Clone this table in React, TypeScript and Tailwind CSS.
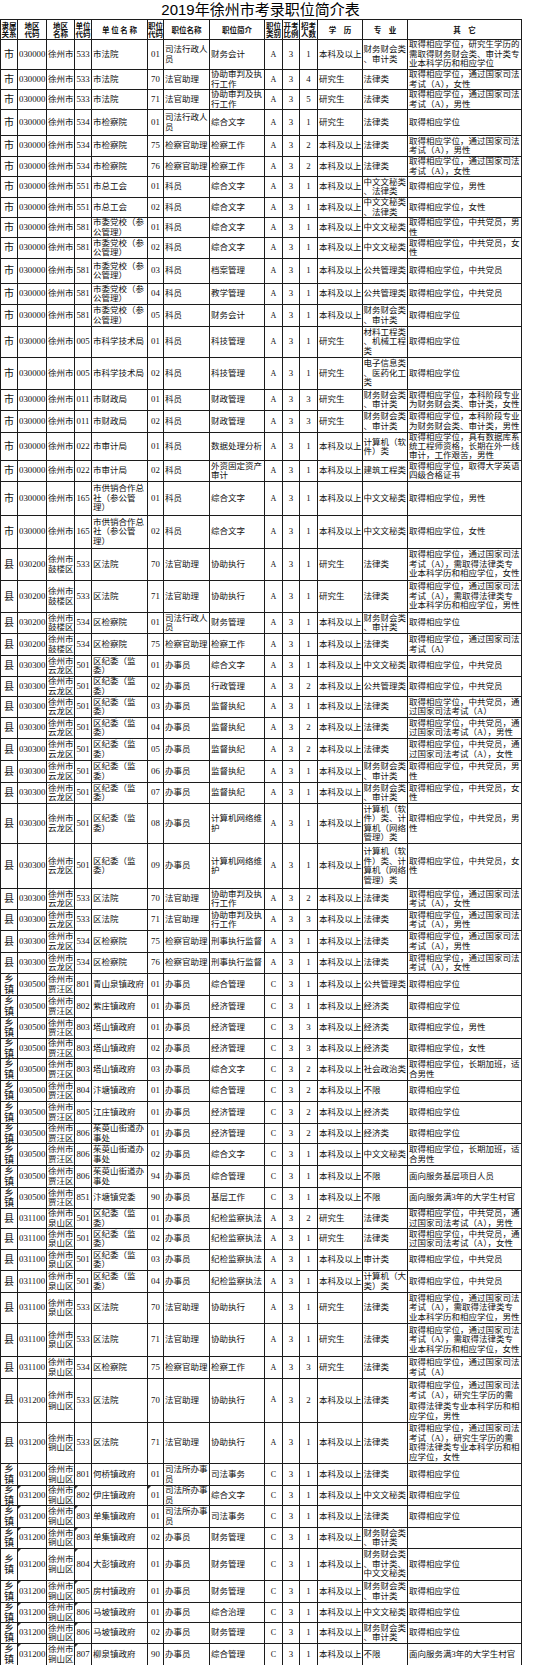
import React from "react";

type Row = [string, string, number[]?, string?];

const CITY = "市|030000|徐州市";
const GL = "县|030200|徐州市鼓楼区";
const YL = "县|030300|徐州市云龙区";
const JW = "乡镇|030500|徐州市贾汪区";
const QS = "县|031100|徐州市泉山区";
const TS = "县|031200|徐州市铜山区";
const TSX = "乡镇|031200|徐州市铜山区";

const rows: Row[] = [
  [CITY + "|533|市法院|01|司法行政人员|财务会计|A|3|1|本科及以上|财务财会类、审计类|取得相应学位，研究生学历的需取得财务财会类、审计类专业本科学历和相应学位", "h-[30px]"],
  [CITY + "|533|市法院|70|法官助理|协助审判及执行工作|A|3|4|研究生|法律类|取得相应学位，通过国家司法考试（A），女性", "h-[20px]"],
  [CITY + "|533|市法院|71|法官助理|协助审判及执行工作|A|3|5|研究生|法律类|取得相应学位，通过国家司法考试（A），男性", "h-[20px]"],
  [CITY + "|534|市检察院|01|司法行政人员|综合文字|A|3|1|研究生|法律类|取得相应学位", "h-[26px]"],
  [CITY + "|534|市检察院|75|检察官助理|检察工作|A|3|2|本科及以上|法律类|取得相应学位，通过国家司法考试（A），男性", "h-[21px]"],
  [CITY + "|534|市检察院|76|检察官助理|检察工作|A|3|2|本科及以上|法律类|取得相应学位，通过国家司法考试（A），女性", "h-[20px]"],
  [CITY + "|551|市总工会|01|科员|综合文字|A|3|1|本科及以上|中文文秘类、法律类|取得相应学位，男性", "h-[21px]"],
  [CITY + "|551|市总工会|02|科员|综合文字|A|3|1|本科及以上|中文文秘类、法律类|取得相应学位，女性", "h-[20px]"],
  [CITY + "|581|市委党校（参公管理）|01|科员|综合文字|A|3|1|本科及以上|中文文秘类|取得相应学位，中共党员，男性", "h-[20px]"],
  [CITY + "|581|市委党校（参公管理）|02|科员|综合文字|A|3|1|本科及以上|中文文秘类|取得相应学位，中共党员，女性", "h-[21px]"],
  [CITY + "|581|市委党校（参公管理）|03|科员|档案管理|A|3|1|本科及以上|公共管理类|取得相应学位，中共党员", "h-[25px]"],
  [CITY + "|581|市委党校（参公管理）|04|科员|教学管理|A|3|1|本科及以上|公共管理类|取得相应学位，中共党员", "h-[21px]"],
  [CITY + "|581|市委党校（参公管理）|05|科员|财务会计|A|3|1|本科及以上|财务财会类、审计类|取得相应学位", "h-[22px]"],
  [CITY + "|005|市科学技术局|01|科员|科技管理|A|3|1|研究生|材料工程类、机械工程类|取得相应学位", "h-[31px]"],
  [CITY + "|005|市科学技术局|02|科员|科技管理|A|3|1|研究生|电子信息类、医药化工类|取得相应学位", "h-[32px]"],
  [CITY + "|011|市财政局|01|科员|财政管理|A|3|3|研究生|财务财会类、审计类|取得相应学位，本科阶段专业为财务财会类、审计类，女性", "h-[21px]"],
  [CITY + "|011|市财政局|02|科员|财政管理|A|3|3|研究生|财务财会类、审计类|取得相应学位，本科阶段专业为财务财会类、审计类，男性", "h-[22px]"],
  [CITY + "|022|市审计局|01|科员|数据处理分析|A|3|1|本科及以上|计算机（软件）类|取得相应学位，具有数据库系统工程师资格，长期在外一线审计，工作艰苦，男性", "h-[28px]", undefined, "leading-[9px]"],
  [CITY + "|022|市审计局|02|科员|外资固定资产审计|A|3|1|本科及以上|建筑工程类|取得相应学位，取得大学英语四级合格证书", "h-[21px]"],
  [CITY + "|165|市供销合作总社（参公管理）|01|科员|综合文字|A|3|1|本科及以上|中文文秘类|取得相应学位，男性", "h-[34px]"],
  [CITY + "|165|市供销合作总社（参公管理）|02|科员|综合文字|A|3|1|本科及以上|中文文秘类|取得相应学位，女性", "h-[33px]"],
  [GL + "|533|区法院|70|法官助理|协助执行|A|3|1|研究生|法律类|取得相应学位，通过国家司法考试（A），需取得法律类专业本科学历和相应学位，女性", "h-[32px]"],
  [GL + "|533|区法院|71|法官助理|协助执行|A|3|1|研究生|法律类|取得相应学位，通过国家司法考试（A），需取得法律类专业本科学历和相应学位，男性", "h-[32px]"],
  [GL + "|534|区检察院|01|司法行政人员|财务管理|A|3|1|本科及以上|财务财会类、审计类|取得相应学位", "h-[21px]"],
  [GL + "|534|区检察院|75|检察官助理|检察工作|A|3|1|本科及以上|法律类|取得相应学位，通过国家司法考试（A）", "h-[22px]"],
  [YL + "|501|区纪委（监委）|01|办事员|综合文字|A|3|1|本科及以上|中文文秘类|取得相应学位，中共党员", "h-[21px]"],
  [YL + "|501|区纪委（监委）|02|办事员|行政管理|A|3|2|本科及以上|公共管理类|取得相应学位，中共党员", "h-[20px]"],
  [YL + "|501|区纪委（监委）|03|办事员|监督执纪|A|3|1|本科及以上|法律类|取得相应学位，中共党员，通过国家司法考试（A）", "h-[21px]"],
  [YL + "|501|区纪委（监委）|04|办事员|监督执纪|A|3|2|本科及以上|法律类|取得相应学位，中共党员，通过国家司法考试（A），男性", "h-[21px]"],
  [YL + "|501|区纪委（监委）|05|办事员|监督执纪|A|3|2|本科及以上|法律类|取得相应学位，中共党员，通过国家司法考试（A），女性", "h-[22px]"],
  [YL + "|501|区纪委（监委）|06|办事员|监督执纪|A|3|1|本科及以上|财务财会类、审计类|取得相应学位，中共党员，男性", "h-[22px]"],
  [YL + "|501|区纪委（监委）|07|办事员|监督执纪|A|3|1|本科及以上|财务财会类、审计类|取得相应学位，中共党员，女性", "h-[21px]"],
  [YL + "|501|区纪委（监委）|08|办事员|计算机网络维护|A|3|1|本科及以上|计算机（软件）类、计算机（网络管理）类|取得相应学位，中共党员，男性", "h-[40px]"],
  [YL + "|501|区纪委（监委）|09|办事员|计算机网络维护|A|3|1|本科及以上|计算机（软件）类、计算机（网络管理）类|取得相应学位，中共党员，女性", "h-[45px]"],
  [YL + "|533|区法院|70|法官助理|协助审判及执行工作|A|3|2|本科及以上|法律类|取得相应学位，通过国家司法考试（A），女性", "h-[21px]"],
  [YL + "|533|区法院|71|法官助理|协助审判及执行工作|A|3|3|本科及以上|法律类|取得相应学位，通过国家司法考试（A），男性", "h-[21px]"],
  [YL + "|534|区检察院|75|检察官助理|刑事执行监督|A|3|1|本科及以上|法律类|取得相应学位，通过国家司法考试（A），男性", "h-[22px]"],
  [YL + "|534|区检察院|76|检察官助理|刑事执行监督|A|3|1|本科及以上|法律类|取得相应学位，通过国家司法考试（A），女性", "h-[21px]"],
  [JW + "|801|青山泉镇政府|01|办事员|综合管理|C|3|1|本科及以上|公共管理类|取得相应学位", "h-[22px]"],
  [JW + "|802|紫庄镇政府|01|办事员|经济管理|C|3|1|本科及以上|经济类|取得相应学位", "h-[22px]"],
  [JW + "|803|塔山镇政府|01|办事员|经济管理|C|3|3|本科及以上|经济类|取得相应学位，男性", "h-[21px]"],
  [JW + "|803|塔山镇政府|02|办事员|经济管理|C|3|3|本科及以上|经济类|取得相应学位，女性", "h-[20px]"],
  [JW + "|803|塔山镇政府|03|办事员|综合文字|C|3|2|本科及以上|社会政治类|取得相应学位，长期加班，适合男性", "h-[22px]"],
  [JW + "|804|汴塘镇政府|01|办事员|综合管理|C|3|2|本科及以上|不限|取得相应学位", "h-[21px]"],
  [JW + "|805|江庄镇政府|01|办事员|经济管理|C|3|2|本科及以上|经济类|取得相应学位", "h-[22px]"],
  [JW + "|806|茱萸山街道办事处|01|办事员|经济管理|C|3|2|本科及以上|经济类|取得相应学位", "h-[20px]"],
  [JW + "|806|茱萸山街道办事处|02|办事员|综合文字|C|3|1|本科及以上|中文文秘类|取得相应学位，长期加班，适合男性", "h-[22px]"],
  [JW + "|806|茱萸山街道办事处|94|办事员|综合管理|C|3|1|本科及以上|不限|面向服务基层项目人员", "h-[22px]"],
  [JW + "|851|汴塘镇党委|90|办事员|基层工作|C|3|1|本科及以上|不限|面向服务满3年的大学生村官", "h-[21px]"],
  [QS + "|501|区纪委（监委）|01|办事员|纪检监察执法|A|3|2|研究生|法律类|取得相应学位，中共党员，通过国家司法考试（A），男性", "h-[20px]"],
  [QS + "|501|区纪委（监委）|02|办事员|纪检监察执法|A|3|1|研究生|法律类|取得相应学位，中共党员，通过国家司法考试（A），女性", "h-[21px]"],
  [QS + "|501|区纪委（监委）|03|办事员|纪检监察执法|A|3|1|本科及以上|审计类|取得相应学位，中共党员", "h-[21px]"],
  [QS + "|501|区纪委（监委）|04|办事员|纪检监察执法|A|3|1|本科及以上|计算机（大类）类|取得相应学位，中共党员", "h-[22px]"],
  [QS + "|533|区法院|70|法官助理|协助执行|A|3|1|研究生|法律类|取得相应学位，通过国家司法考试（A），需取得法律类专业本科学历和相应学位，男性", "h-[31px]"],
  [QS + "|533|区法院|71|法官助理|协助执行|A|3|1|研究生|法律类|取得相应学位，通过国家司法考试（A），需取得法律类专业本科学历和相应学位，女性", "h-[33px]"],
  [QS + "|534|区检察院|75|检察官助理|检察工作|A|3|3|研究生|法律类|取得相应学位，通过国家司法考试（A）", "h-[22px]"],
  [TS + "|533|区法院|70|法官助理|协助执行|A|3|2|本科及以上|法律类|取得相应学位，通过国家司法考试（A），研究生学历的需取得法律类专业本科学历和相应学位，男性", "h-[44px]", undefined, "leading-[10.5px]"],
  [TS + "|533|区法院|71|法官助理|协助执行|A|3|1|本科及以上|法律类|取得相应学位，通过国家司法考试（A），研究生学历的需取得法律类专业本科学历和相应学位，女性", "h-[41px]"],
  [TSX + "|801|何桥镇政府|01|司法所办事员|司法事务|C|3|1|本科及以上|法律类|取得相应学位", "h-[22px]"],
  [TSX + "|802|伊庄镇政府|01|司法所办事员|综合文字|C|3|1|本科及以上|中文文秘类|取得相应学位", "h-[20px]", [1, 3, 5]],
  [TSX + "|803|单集镇政府|01|司法所办事员|司法事务|C|3|1|本科及以上|法律类|取得相应学位", "h-[22px]", [1, 3]],
  [TSX + "|803|单集镇政府|02|办事员|财务管理|C|3|1|本科及以上|财务财会类、审计类|", "h-[21px]", [1, 3]],
  [TSX + "|804|大彭镇政府|01|办事员|财务管理|C|3|1|本科及以上|财务财会类、审计类、中文文秘类|取得相应学位", "h-[32px]", [1, 3]],
  [TSX + "|805|房村镇政府|01|办事员|财务管理|C|3|1|本科及以上|财务财会类、审计类|取得相应学位", "h-[22px]", [1, 3]],
  [TSX + "|806|马坡镇政府|01|办事员|综合治理|C|3|1|本科及以上|中文文秘类|取得相应学位", "h-[20px]", [1, 3]],
  [TSX + "|806|马坡镇政府|02|办事员|财务管理|C|3|1|本科及以上|财务财会类、审计类|取得相应学位", "h-[21px]", [1, 3]],
  [TSX + "|807|柳泉镇政府|90|办事员|综合管理|C|3|1|本科及以上|不限|面向服务满3年的大学生村官", "h-[22px]", [1, 3]],
];

// per-column text styling (inner block)
const colText: string[] = [
  "text-center text-[10px] px-[1px]",
  "text-left text-[8.8px] pl-[1px]",
  "text-left text-[8.5px] pl-[1px]",
  "text-center text-[8.8px]",
  "text-left text-[8.5px] pl-[1px]",
  "text-center text-[8.8px]",
  "text-left text-[8.5px] pl-[1px]",
  "text-left text-[8.5px] pl-[1px]",
  "text-center text-[8px]",
  "text-center text-[8.8px]",
  "text-center text-[8.8px]",
  "text-left text-[8.5px] pl-[1px]",
  "text-left text-[8.5px] pl-[0.5px] [line-break:anywhere]",
  "text-left text-[8.5px] pl-[1px] [line-break:anywhere]",
];

const gridCols =
  "grid grid-cols-[17px_29px_28px_17px_56px_16px_46px_55px_18px_17px_18px_45px_45px_114px]";

const headers: string[][] = [
  ["隶属", "关系"],
  ["地区", "代码"],
  ["地区", "名称"],
  ["单位", "代码"],
  ["单 位 名 称"],
  ["职位", "代码"],
  ["职位名称"],
  ["职位简介"],
  ["职位", "类别"],
  ["开考", "比例"],
  ["招考", "人数"],
  ["学　历"],
  ["专　业"],
  ["其　它"],
];

const cellBase =
  "relative flex items-center overflow-hidden border-r border-b border-[#1c1c1c]";

export default function App() {
  return (
    <div className="w-[550px] h-[1665px] overflow-hidden bg-white text-[#111] font-['Liberation_Serif','Noto_Sans_CJK_SC',serif]">
      <div className="w-[521px] h-[19px] flex items-center justify-center text-[15px] leading-[19px] text-black font-['Liberation_Sans','Noto_Sans_CJK_SC',sans-serif]">
        2019年徐州市考录职位简介表
      </div>
      <div className="w-fit border-l border-t border-[#1c1c1c]">
        <div className={gridCols + " h-[20px]"}>
          {headers.map((h, i) => (
            <div key={i} className={cellBase + " justify-center"}>
              <div className="w-full text-center text-[7.5px] leading-[8px] font-bold font-['Noto_Sans_CJK_SC',sans-serif] whitespace-pre">
                {h.map((line, j) => (
                  <div key={j}>{line}</div>
                ))}
              </div>
            </div>
          ))}
        </div>
        {rows.map(([data, h, marks, lead], ri) => {
          const cells = data.split("|");
          const leading = lead ?? "leading-[9.5px]";
          return (
            <div key={ri} className={gridCols + " " + h}>
              {cells.map((txt, ci) => (
                <div key={ci} className={cellBase}>
                  {marks && marks.includes(ci) ? (
                    <span className="absolute left-0 top-0 w-0 h-0 border-t-[3px] border-r-[3px] border-t-[#333] border-r-transparent" />
                  ) : null}
                  <div className={"w-full " + leading + " " + colText[ci]}>{txt}</div>
                </div>
              ))}
            </div>
          );
        })}
      </div>
    </div>
  );
}
